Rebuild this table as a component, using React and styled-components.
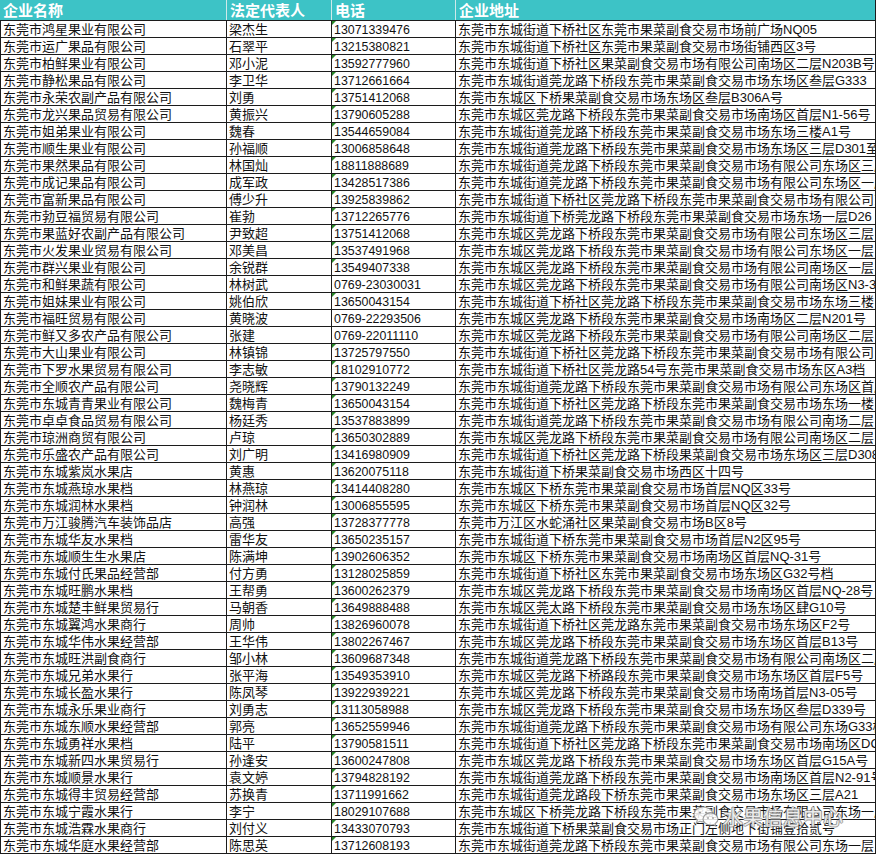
import React from "react";
import styled, { createGlobalStyle } from "styled-components";

const GlobalStyle = createGlobalStyle`
  html, body { margin: 0; padding: 0; background: #ffffff; }
  body { font-family: "Liberation Sans", "Noto Sans CJK SC", sans-serif; }
`;

const Sheet = styled.div`
  position: relative;
  width: 876px;
  height: 854px;
  overflow: hidden;
  background: #ffffff;
`;

const Row = styled.div`
  display: grid;
  grid-template-columns: 227px 105px 124px 420px;
  height: ${(p) => (p.$head ? 21 : 17)}px;
  box-sizing: border-box;
  border-bottom: 1px solid #1c1c1c;
  background: ${(p) => (p.$head ? "#3dc3c6" : "#ffffff")};
`;

const HeadCell = styled.div`
  box-sizing: border-box;
  padding: 2px 0 0 3px;
  font-size: 15px;
  line-height: 17px;
  font-weight: 700;
  color: #ffffff;
  white-space: nowrap;
  overflow: hidden;
  border-right: 1px solid ${(p) => (p.$last ? "#1c1c1c" : "#cfe9ea")};
`;

const Cell = styled.div`
  position: relative;
  box-sizing: border-box;
  padding: 1px 0 0 2px;
  font-size: ${(p) => (p.$num ? "12.4px" : "13px")};
  line-height: 16px;
  color: #111111;
  white-space: nowrap;
  overflow: hidden;
  border-right: 1px solid #1c1c1c;
  border-left: ${(p) => (p.$first ? "1px solid #1c1c1c" : "none")};
`;

const Flag = styled.span`
  position: absolute;
  left: 0;
  top: 0;
  width: 0;
  height: 0;
  border-top: 4px solid #2a8a2a;
  border-right: 4px solid transparent;
`;

const Watermark = styled.div`
  position: absolute;
  left: 692px;
  top: 804px;
  display: flex;
  align-items: center;
  gap: 3px;
  pointer-events: none;
`;

const MarkText = styled.span`
  font-family: "Noto Sans CJK SC", sans-serif;
  font-size: 20px;
  line-height: 26px;
  color: rgba(255, 255, 255, 0.85);
  text-shadow: 0 0 1px #888, 0 0 1px #888, 1px 0 0 rgba(140,140,140,0.6), -1px 0 0 rgba(140,140,140,0.6), 0 1px 0 rgba(140,140,140,0.6), 0 -1px 0 rgba(140,140,140,0.6);
`;

const WeChatIcon = () => (
  <svg width="28" height="26" viewBox="0 0 28 26">
    <g fill="rgba(255,255,255,0.85)" stroke="rgba(130,130,130,0.75)" strokeWidth="1.2">
      <path d="M11 3c-5 0-9 3.3-9 7.4 0 2.3 1.3 4.3 3.3 5.7l-0.9 2.9 3.3-1.7c1 0.3 2.1 0.5 3.3 0.5 0.3 0 0.6 0 0.9 0-0.2-0.6-0.3-1.2-0.3-1.8 0-4 3.8-7.1 8.5-7.1 0.3 0 0.5 0 0.8 0C19.9 5.6 15.9 3 11 3z" />
      <path d="M26 15c0-3.4-3.4-6.1-7.5-6.1S11 11.6 11 15s3.4 6.1 7.5 6.1c0.9 0 1.8-0.1 2.6-0.4l2.7 1.4-0.7-2.4C24.8 18.6 26 16.9 26 15z" />
    </g>
    <g fill="rgba(130,130,130,0.8)">
      <circle cx="8" cy="8.5" r="1.1" />
      <circle cx="14" cy="8.5" r="1.1" />
      <circle cx="16" cy="14" r="0.9" />
      <circle cx="21" cy="14" r="0.9" />
    </g>
  </svg>
);

const rows = [
  ["东莞市鸿星果业有限公司", "梁杰生", "13071339476", "东莞市东城街道下桥社区东莞市果菜副食交易市场前广场NQ05"],
  ["东莞市运广果品有限公司", "石翠平", "13215380821", "东莞市东城街道下桥社区东莞市果菜副食交易市场街铺西区3号"],
  ["东莞市柏鲜果业有限公司", "邓小泥", "13592777960", "东莞市东城街道下桥社区果菜副食交易市场有限公司南场区二层N203B号"],
  ["东莞市静松果品有限公司", "李卫华", "13712661664", "东莞市东城街道莞龙路下桥段东莞市果菜副食交易市场东场区叁层G333"],
  ["东莞市永荣农副产品有限公司", "刘勇", "13751412068", "东莞市东城区下桥果菜副食交易市场东场区叁层B306A号"],
  ["东莞市龙兴果品贸易有限公司", "黄振兴", "13790605288", "东莞市东城区莞龙路下桥段东莞市果菜副食交易市场南场区首层N1-56号"],
  ["东莞市姐弟果业有限公司", "魏春", "13544659084", "东莞市东城街道莞龙路下桥段东莞市果菜副食交易市场东场三楼A1号"],
  ["东莞市顺生果业有限公司", "孙福顺", "13006858648", "东莞市东城街道莞龙路下桥段东莞市果菜副食交易市场东场区三层D301至D302号"],
  ["东莞市果然果品有限公司", "林国灿", "18811888689", "东莞市东城街道莞龙路下桥段东莞市果菜副食交易市场有限公司东场区三层"],
  ["东莞市成记果品有限公司", "成军政", "13428517386", "东莞市东城街道莞龙路下桥段东莞市果菜副食交易市场有限公司东场区一层"],
  ["东莞市富新果品有限公司", "傅少升", "13925839862", "东莞市东城街道下桥社区莞龙路下桥段东莞市果菜副食交易市场有限公司东场区"],
  ["东莞市勃豆福贸易有限公司", "崔勃", "13712265776", "东莞市东城街道下桥莞龙路下桥段东莞市果菜副食交易市场东场一层D26"],
  ["东莞市果蓝好农副产品有限公司", "尹致超", "13751412068", "东莞市东城区莞龙路下桥段东莞市果菜副食交易市场有限公司东场区三层"],
  ["东莞市火发果业贸易有限公司", "邓美昌", "13537491968", "东莞市东城区莞龙路下桥段东莞市果菜副食交易市场有限公司东场区一层"],
  ["东莞市群兴果业有限公司", "余锐群", "13549407338", "东莞市东城区莞龙路下桥段东莞市果菜副食交易市场有限公司南场区一层"],
  ["东莞市和鲜果蔬有限公司", "林树武", "0769-23030031", "东莞市东城区莞龙路下桥段东莞市果菜副食交易市场有限公司南场区N3-35号"],
  ["东莞市姐妹果业有限公司", "姚伯欣", "13650043154", "东莞市东城街道下桥社区莞龙路下桥段东莞市果菜副食交易市场东场三楼"],
  ["东莞市福旺贸易有限公司", "黄晓波", "0769-22293506", "东莞市东城区莞龙路下桥段东莞市果菜副食交易市场南场区二层N201号"],
  ["东莞市鲜又多农产品有限公司", "张建", "0769-22011110", "东莞市东城区莞龙路下桥段东莞市果菜副食交易市场有限公司南场区二层"],
  ["东莞市大山果业有限公司", "林镇锦", "13725797550", "东莞市东城街道下桥社区莞龙路下桥段东莞市果菜副食交易市场有限公司"],
  ["东莞市下罗水果贸易有限公司", "李志敏", "18102910772", "东莞市东城街道下桥社区莞龙路54号东莞市果菜副食交易市场东区A3档"],
  ["东莞市全顺农产品有限公司", "尧晓辉", "13790132249", "东莞市东城街道莞龙路下桥段东莞市果菜副食交易市场有限公司东场区首层"],
  ["东莞市东城青青果业有限公司", "魏梅青", "13650043154", "东莞市东城街道下桥社区莞龙路下桥段东莞市果菜副食交易市场东场一楼"],
  ["东莞市卓卓食品贸易有限公司", "杨廷秀", "13537883899", "东莞市东城街道莞龙路下桥段东莞市果菜副食交易市场有限公司南场二层"],
  ["东莞市琼洲商贸有限公司", "卢琼", "13650302889", "东莞市东城区莞龙路下桥段东莞市果菜副食交易市场有限公司南场区二层"],
  ["东莞市乐盛农产品有限公司", "刘广明", "13416980909", "东莞市东城街道下桥社区莞龙路下桥段果菜副食交易市场东场区三层D308"],
  ["东莞市东城紫岚水果店", "黄惠", "13620075118", "东莞市东城街道下桥果菜副食交易市场西区十四号"],
  ["东莞市东城燕琼水果档", "林燕琼", "13414408280", "东莞市东城区下桥东莞市果菜副食交易市场首层NQ区33号"],
  ["东莞市东城润林水果档", "钟润林", "13006855595", "东莞市东城区下桥东莞市果菜副食交易市场首层NQ区32号"],
  ["东莞市万江骏腾汽车装饰品店", "高强", "13728377778", "东莞市万江区水蛇涌社区果菜副食交易市场B区8号"],
  ["东莞市东城华友水果档", "雷华友", "13650235157", "东莞市东城街道下桥东莞市果菜副食交易市场首层N2区95号"],
  ["东莞市东城顺生生水果店", "陈满坤", "13902606352", "东莞市东城区下桥东莞市果菜副食交易市场南场区首层NQ-31号"],
  ["东莞市东城付氏果品经营部", "付方勇", "13128025859", "东莞市东城街道下桥社区东莞市果菜副食交易市场东场区G32号档"],
  ["东莞市东城旺鹏水果档", "王帮勇", "13600262379", "东莞市东城区莞龙路下桥段东莞市果菜副食交易市场南场区首层NQ-28号"],
  ["东莞市东城楚丰鲜果贸易行", "马朝香", "13649888488", "东莞市东城区莞太路下桥段东莞市果菜副食交易市场东场区肆G10号"],
  ["东莞市东城翼鸿水果商行", "周帅", "13826960078", "东莞市东城街道下桥社区莞龙路东莞市果菜副食交易市场东场区F2号"],
  ["东莞市东城华伟水果经营部", "王华伟", "13802267467", "东莞市东城区莞龙路下桥段东莞市果菜副食交易市场东场区首层B13号"],
  ["东莞市东城旺洪副食商行", "邹小林", "13609687348", "东莞市东城街道莞龙路下桥段东莞市果菜副食交易市场有限公司南场区二层"],
  ["东莞市东城兄弟水果行", "张平海", "13549353910", "东莞市东城区莞龙路下桥路段东莞市果菜副食交易市场东场区首层F5号"],
  ["东莞市东城长盈水果行", "陈凤琴", "13922939221", "东莞市东城区莞龙路下桥段东莞市果菜副食交易市场南场首层N3-05号"],
  ["东莞市东城永乐果业商行", "刘勇志", "13113058988", "东莞市东城区莞龙路下桥段东莞市果菜副食交易市场东场区叁层D339号"],
  ["东莞市东城东顺水果经营部", "郭亮", "13652559946", "东莞市东城街道莞龙路下桥段东莞市果菜副食交易市场有限公司东场G33档"],
  ["东莞市东城勇祥水果档", "陆平", "13790581511", "东莞市东城街道下桥社区莞龙路下桥段东莞市果菜副食交易市场南场区DC01"],
  ["东莞市东城新四水果贸易行", "孙逢安", "13600247808", "东莞市东城区莞龙路下桥段东莞市果菜副食交易市场东场区首层G15A号"],
  ["东莞市东城顺景水果行", "袁文婷", "13794828192", "东莞市东城街道莞龙路下桥段东莞市果菜副食交易市场南场区首层N2-91号"],
  ["东莞市东城得丰贸易经营部", "苏换青", "13711991662", "东莞市东城街道莞龙路段下桥东莞市果菜副食交易市场东场区三层A21"],
  ["东莞市东城宁霞水果行", "李宁", "18029107688", "东莞市东城区下桥莞龙路下桥段东莞市果菜副食交易市场有限公司东场一层"],
  ["东莞市东城浩霖水果商行", "刘付义", "13433070793", "东莞市东城街道下桥果菜副食交易市场正门左侧地下街铺壹拾贰号"],
  ["东莞市东城华庭水果经营部", "陈思英", "13712608193", "东莞市东城街道莞龙路下桥段东莞市果菜副食交易市场有限公司东场一层"],
];

export default function App() {
  return (
    <>
      <GlobalStyle />
      <Sheet>
        <Row $head>
          <HeadCell>企业名称</HeadCell>
          <HeadCell>法定代表人</HeadCell>
          <HeadCell>电话</HeadCell>
          <HeadCell $last>企业地址</HeadCell>
        </Row>
        {rows.map(([name, rep, phone, addr], i) => (
          <Row key={i}>
            <Cell $first>{name}</Cell>
            <Cell>{rep}</Cell>
            <Cell $num>
              {!phone.startsWith("0769") && <Flag />}
              {phone}
            </Cell>
            <Cell>{addr}</Cell>
          </Row>
        ))}
        <Watermark>
          <WeChatIcon />
          <MarkText>水果信息中心</MarkText>
        </Watermark>
      </Sheet>
    </>
  );
}
